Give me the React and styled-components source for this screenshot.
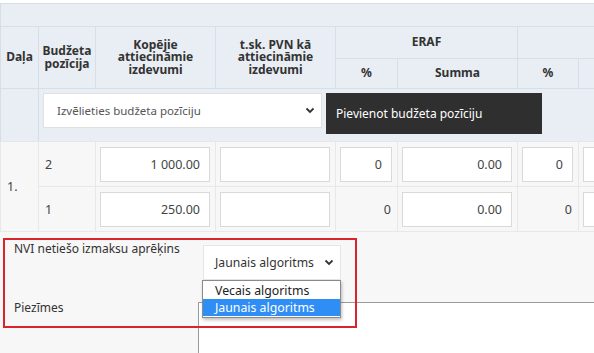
import React from "react";
import styled, { createGlobalStyle } from "styled-components";

const GlobalStyle = createGlobalStyle`
  html, body {
    margin: 0;
    padding: 0;
    background: #ffffff;
    overflow: hidden;
  }
  body {
    font-family: "Noto Sans", "Open Sans", Arial, sans-serif;
    color: #333;
  }
`;

const Page = styled.div`
  width: 594px;
  height: 353px;
  overflow: hidden;
  position: relative;
  padding-top: 3px;
  box-sizing: border-box;
`;

const Table = styled.table`
  border-collapse: collapse;
  table-layout: fixed;
  width: 698px;
`;

const Band = styled.th`
  height: 22px;
  background: #e9eef4;
  border: 1px solid #d6dee6;
  padding: 0;
`;

const Th = styled.th`
  background: #e9eef4;
  border: 1px solid #d6dee6;
  font-size: 12px;
  font-weight: 700;
  line-height: 12.5px;
  color: #333;
  text-align: center;
  padding: 0 3px;
  height: ${(p) => p.$h || 30}px;
`;

const SelectRow = styled.tr`
  background: #e9eef4;
  td {
    border: 1px solid #d6dee6;
    border-bottom-color: #e3e7eb;
  }
`;

const SelectCell = styled.td`
  padding: 4px 4px 6px 4px;
  height: 42px;
  vertical-align: top;
`;

const SelectGroup = styled.div`
  display: flex;
  align-items: flex-start;
  gap: 4px;
`;

const PositionSelect = styled.div`
  width: 279px;
  height: 35px;
  background: #fff;
  border: 1px solid #e0e0e0;
  box-sizing: border-box;
  display: flex;
  align-items: center;
  justify-content: space-between;
  padding: 0 6px 0 13px;
  font-size: 11.5px;
  color: #555;
`;

const DarkButton = styled.div`
  width: 216px;
  height: 41px;
  background: #2f2f2f;
  color: #fff;
  font-size: 12px;
  display: flex;
  align-items: center;
  padding-left: 10px;
  box-sizing: border-box;
`;

const Td = styled.td`
  background: #f7f7f7;
  border: 1px solid #e8e8e8;
  font-size: 12.5px;
  color: #444;
  padding: ${(p) => (p.$plain ? "0 6px" : "0 5px 0 4px")};
  text-align: ${(p) => (p.$right ? "right" : "left")};
  height: ${(p) => p.$h || 44}px;
`;

const NumInput = styled.div`
  height: 35px;
  background: #fff;
  border: 1px solid #d9d9d9;
  box-sizing: border-box;
  display: flex;
  align-items: center;
  justify-content: flex-end;
  padding-right: 9px;
  font-size: 12.5px;
  color: #444;
`;

const Form = styled.div`
  background: #f7f7f7;
  padding-top: 11px;
  position: relative;
`;

const FieldRow = styled.div`
  display: grid;
  grid-template-columns: 198px 1fr;
  height: ${(p) => p.$h}px;
`;

const Label = styled.div`
  padding-left: 14px;
  padding-top: ${(p) => p.$top || 0}px;
  font-size: 12px;
  line-height: 12px;
  color: #333;
`;

const SelectWrap = styled.div`
  position: relative;
  padding-left: 5px;
  padding-top: 2px;
`;

const AlgoSelect = styled.div`
  width: 138px;
  height: 35px;
  background: #fff;
  border: 1px solid #e6e6e6;
  box-sizing: border-box;
  display: flex;
  align-items: center;
  justify-content: space-between;
  padding: 0 6px 0 11px;
  font-size: 12.2px;
  color: #333;
`;

const Listbox = styled.ul`
  position: absolute;
  top: 37px;
  left: 4px;
  width: 139px;
  margin: 0;
  padding: 1px 0;
  list-style: none;
  background: #fff;
  border: 1px solid #8a8a8a;
  box-sizing: border-box;
  box-shadow: 1px 2px 3px rgba(0, 0, 0, 0.25);
  z-index: 3;
`;

const Option = styled.li`
  height: 17px;
  line-height: 17px;
  padding-left: 12px;
  font-size: 12.3px;
  color: ${(p) => (p.$active ? "#fff" : "#222")};
  background: ${(p) => (p.$active ? "#2f8ef5" : "transparent")};
`;

const Notes = styled.div`
  height: 80px;
  background: #fff;
  border-top: 1px solid #9a9a9a;
  border-left: 1px solid #9a9a9a;
`;

const Highlight = styled.div`
  position: absolute;
  left: 3px;
  top: 6px;
  width: 354px;
  height: 90px;
  border: 2px solid #d9232d;
  box-sizing: border-box;
  pointer-events: none;
  z-index: 4;
`;

const Chevron = () => (
  <svg width="10" height="7" viewBox="0 0 10 7">
    <path d="M1.5 1.5 L5 5 L8.5 1.5" fill="none" stroke="#333" strokeWidth="1.8" />
  </svg>
);

export default function App() {
  return (
    <Page>
      <GlobalStyle />
      <Table>
        <colgroup>
          <col style={{ width: 38 }} />
          <col style={{ width: 57 }} />
          <col style={{ width: 120 }} />
          <col style={{ width: 120 }} />
          <col style={{ width: 62 }} />
          <col style={{ width: 120 }} />
          <col style={{ width: 61 }} />
          <col style={{ width: 120 }} />
        </colgroup>
        <thead>
          <tr>
            <Band colSpan={8} />
          </tr>
          <tr>
            <Th rowSpan={2}>Daļa</Th>
            <Th rowSpan={2}>Budžeta pozīcija</Th>
            <Th rowSpan={2}>
              Kopējie
              <br />
              attiecināmie
              <br />
              izdevumi
            </Th>
            <Th rowSpan={2}>
              t.sk. PVN kā
              <br />
              attiecināmie
              <br />
              izdevumi
            </Th>
            <Th colSpan={2} $h={31}>ERAF</Th>
            <Th colSpan={2} $h={31} />
          </tr>
          <tr>
            <Th $h={29}>%</Th>
            <Th $h={29}>Summa</Th>
            <Th $h={29}>%</Th>
            <Th $h={29}>Summa</Th>
          </tr>
        </thead>
        <tbody>
          <SelectRow>
            <td />
            <SelectCell colSpan={7}>
              <SelectGroup>
                <PositionSelect>
                  Izvēlieties budžeta pozīciju
                  <Chevron />
                </PositionSelect>
                <DarkButton>Pievienot budžeta pozīciju</DarkButton>
              </SelectGroup>
            </SelectCell>
          </SelectRow>
          <tr>
            <Td rowSpan={2} $plain>1.</Td>
            <Td $plain>2</Td>
            <Td><NumInput>1 000.00</NumInput></Td>
            <Td><NumInput /></Td>
            <Td><NumInput>0</NumInput></Td>
            <Td><NumInput>0.00</NumInput></Td>
            <Td><NumInput>0</NumInput></Td>
            <Td><NumInput /></Td>
          </tr>
          <tr>
            <Td $plain>1</Td>
            <Td><NumInput>250.00</NumInput></Td>
            <Td><NumInput /></Td>
            <Td $right $plain>0</Td>
            <Td><NumInput>0.00</NumInput></Td>
            <Td $right $plain>0</Td>
            <Td><NumInput /></Td>
          </tr>
        </tbody>
      </Table>
      <Form>
        <FieldRow $h={59}>
          <Label>NVI netiešo izmaksu aprēķins</Label>
          <SelectWrap>
            <AlgoSelect>
              Jaunais algoritms
              <Chevron />
            </AlgoSelect>
            <Listbox>
              <Option>Vecais algoritms</Option>
              <Option $active>Jaunais algoritms</Option>
            </Listbox>
          </SelectWrap>
        </FieldRow>
        <FieldRow $h={80}>
          <Label>Piezīmes</Label>
          <Notes />
        </FieldRow>
        <Highlight />
      </Form>
    </Page>
  );
}
